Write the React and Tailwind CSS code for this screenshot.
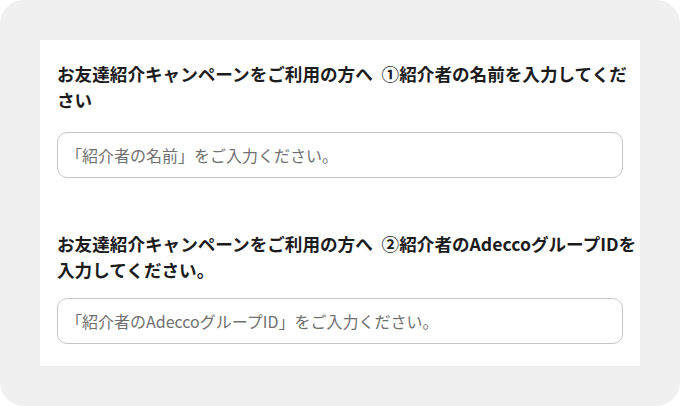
const font = { fontFamily: '"Noto Sans CJK JP", "Noto Sans", sans-serif' };
const gap = '\u2002';

function Field({ label, lineTwo, placeholder, gapClass }) {
  return (
    <div>
      <h2 className="text-[17.6px] leading-[26px] font-bold text-[#1c1c1c]">
        <span className="whitespace-nowrap">{label}</span>
        <br />
        {lineTwo}
      </h2>
      <input
        type="text"
        placeholder={placeholder}
        className={`${gapClass} block w-full h-[46px] rounded-[10px] border-[1.5px] border-[#c6c6c6] bg-white px-[8px] text-[16px] text-[#333] placeholder:text-[#707070] outline-none`}
      />
    </div>
  );
}

export default function App() {
  return (
    <div className="w-[680px] h-[406px] bg-white" style={font}>
      <div className="h-full rounded-[24px] bg-[#f0f0f0] p-[40px]">
        <div className="h-full bg-white px-[17px] pt-[21px]">
          <Field
            label={`お友達紹介キャンペーンをご利用の方へ${gap}①紹介者の名前を入力してくだ`}
            lineTwo="さい"
            placeholder="「紹介者の名前」をご入力ください。"
            gapClass="mt-[19px]"
          />
          <div className="mt-[53px]">
            <Field
              label={`お友達紹介キャンペーンをご利用の方へ${gap}②紹介者のAdeccoグループIDを`}
              lineTwo="入力してください。"
              placeholder="「紹介者のAdeccoグループID」をご入力ください。"
              gapClass="mt-[15px]"
            />
          </div>
        </div>
      </div>
    </div>
  );
}
